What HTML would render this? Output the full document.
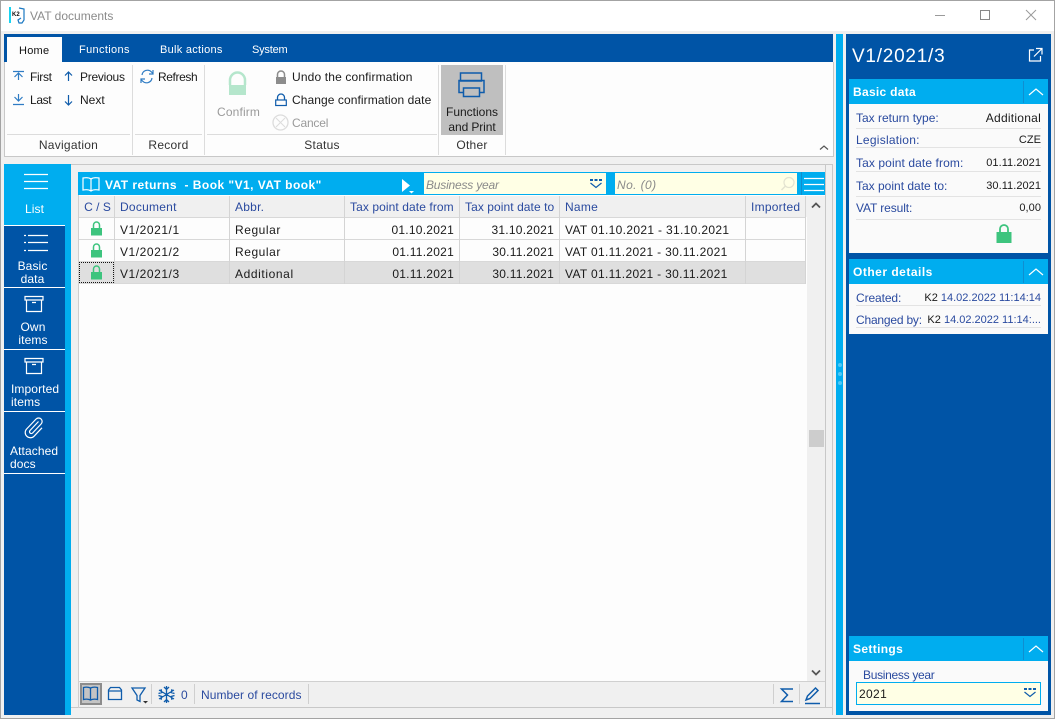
<!DOCTYPE html>
<html><head><meta charset="utf-8">
<style>
html,body{margin:0;padding:0;width:1055px;height:719px;overflow:hidden;background:#f0f0f0}
body{position:relative;font-family:"Liberation Sans",sans-serif;font-size:12px;color:#1a1a1a}
.a{position:absolute}
.t{position:absolute;white-space:nowrap;line-height:16px;letter-spacing:.25px}
.r{text-align:right}
.c{text-align:center}
.lb{color:#2a4a9f}
.g{color:#9a9a9a}
.v{font-size:11px;letter-spacing:.05px}
svg{position:absolute;overflow:visible}
.bl{fill:none;stroke:#0f5cab;stroke-width:1.2}
.w{fill:none;stroke:#fff;stroke-width:1.2}
.nav{position:absolute;left:4px;width:61px;height:61px;background:#0054a6;color:#fff}
.nav .t{left:0;width:58px;text-align:center;color:#fff;line-height:13px;letter-spacing:.1px}
.line{position:absolute;background:#dcdcdc}
.hd{position:absolute;left:849px;width:199px;height:25px;background:#00adef;color:#fff;font-weight:bold}
.card{position:absolute;left:849px;width:199px;background:#fafafa}
</style></head><body>
<div class="a" style="left:0;top:0;width:1053px;height:717px;border:1px solid #a3a3a3"></div>
<div class="a" style="left:1px;top:1px;width:1053px;height:30px;background:#fff"></div>
<div class="a" style="left:9px;top:7px;width:2px;height:16px;background:#19d3f0"></div>
<div class="a" style="left:12px;top:12px;font:bold 6px 'Liberation Sans',sans-serif;color:#111">K2</div>
<svg style="left:0;top:0" width="30" height="30"><path d="M19 8l5 1v11l-2 3h-3l-1-3 3-2" fill="none" stroke="#1a78c2" stroke-width="1.2"/></svg>
<div class="t" style="left:30px;top:8px;color:#8b8b8b;letter-spacing:0">VAT documents</div>
<svg style="left:0;top:0" width="1055" height="30"><path d="M935 15.500h10" stroke="#9a9a9a"/><rect x="980.500" y="10.500" width="9" height="9" fill="none" stroke="#888"/><path d="M1026 10l10 10M1036 10l-10 10" stroke="#9a9a9a" fill="none"/></svg>

<!-- Ribbon -->
<div class="a" style="left:4px;top:34px;width:829px;height:28px;background:#0054a6"></div>
<div class="a" style="left:7px;top:37px;width:55px;height:25px;background:#fdfdfd"></div>
<div class="t" style="left:19px;top:43px;font-size:11px;color:#111">Home</div>
<div class="t" style="left:79px;top:42px;font-size:11px;color:#fff;letter-spacing:.35px">Functions</div>
<div class="t" style="left:160px;top:42px;font-size:11px;color:#fff;letter-spacing:.28px">Bulk actions</div>
<div class="t" style="left:252px;top:42px;font-size:11px;color:#fff;letter-spacing:-.2px">System</div>
<div class="a" style="left:4px;top:62px;width:828px;height:94px;background:#fdfdfd;border:solid #c8c8c8;border-width:0 1px 1px 1px;box-sizing:content-box"></div>
<div class="line" style="left:132px;top:65px;width:1px;height:90px"></div>
<div class="line" style="left:204px;top:65px;width:1px;height:90px"></div>
<div class="line" style="left:438px;top:65px;width:1px;height:90px"></div>
<div class="line" style="left:505px;top:65px;width:1px;height:90px"></div>
<div class="line" style="left:7px;top:134px;width:123px;height:1px"></div>
<div class="line" style="left:135px;top:134px;width:67px;height:1px"></div>
<div class="line" style="left:207px;top:134px;width:230px;height:1px"></div>
<svg style="left:0;top:0" width="840" height="160">
<g class="bl">
<path d="M13 71.500h11M18.500 80v-7M14.500 77l4-4 4 4" stroke="#2f7cc4"/>
<path d="M18.500 94v7M14.500 97l4 4 4-4M13 104.500h11" stroke="#2f7cc4"/>
<path d="M68.500 81v-9M65 75.500l3.500-3.500 3.500 3.500"/>
<path d="M68.500 95v10M65 101.500l3.500 3.500 3.500-3.500"/>
<path d="M142 75a5.500 5.500 0 0 1 9.500-3l1.500 1.500M153 70v4h-4M152 78a5.500 5.500 0 0 1-9.500 3l-1.500-1.500M141 83v-4h4" stroke="#2f7cc4"/>
</g>
<path d="M230 85v-5a7.500 7.500 0 0 1 15 0v5" fill="none" stroke="#b5e6cc" stroke-width="2.500"/><rect x="229" y="85" width="17" height="10" fill="#b5e6cc"/>
<path d="M277.500 77v-2.500a3.500 3.500 0 0 1 7 0v2.500" fill="none" stroke="#8c8c8c" stroke-width="1.500"/><rect x="276" y="77" width="10" height="7" fill="#8c8c8c"/>
<path d="M277.500 100v-2.500a3.500 3.500 0 0 1 7 0v2.500" fill="none" stroke="#0f5cab" stroke-width="1.300"/><rect x="275.700" y="100" width="10.600" height="5.500" fill="none" stroke="#0f5cab" stroke-width="1.200"/>
<circle cx="280.500" cy="122.500" r="7.500" fill="none" stroke="#dcdcdc" stroke-width="1.300"/><path d="M276 118l9 9M285 118l-9 9" stroke="#dcdcdc"/>
<path d="M820 149.500l4-3.500 4 3.500" fill="none" stroke="#555" stroke-width="1.200"/>
</svg>
<div class="t" style="left:30px;top:69px;letter-spacing:-.35px">First</div>
<div class="t" style="left:80px;top:69px;letter-spacing:-.25px">Previous</div>
<div class="t" style="left:30px;top:92px;letter-spacing:-.35px">Last</div>
<div class="t" style="left:80px;top:92px;letter-spacing:0">Next</div>
<div class="t" style="left:158px;top:69px;letter-spacing:-.4px">Refresh</div>
<div class="t g" style="left:217px;top:104px;letter-spacing:.15px">Confirm</div>
<div class="t" style="left:292px;top:69px;letter-spacing:.15px">Undo the confirmation</div>
<div class="t" style="left:292px;top:92px;letter-spacing:.08px">Change confirmation date</div>
<div class="t g" style="left:292px;top:115px;letter-spacing:-.2px">Cancel</div>
<div class="t c" style="left:7px;top:137px;width:123px;color:#333">Navigation</div>
<div class="t c" style="left:135px;top:137px;width:67px;color:#333">Record</div>
<div class="t c" style="left:207px;top:137px;width:230px;color:#333">Status</div>
<div class="t c" style="left:439px;top:137px;width:66px;color:#333">Other</div>
<div class="a" style="left:441px;top:65px;width:62px;height:70px;background:#bfbfbf"></div>
<svg style="left:441px;top:65px" width="62" height="40"><g fill="none" stroke="#0f5cab" stroke-width="1.500"><rect x="19.500" y="8" width="21" height="8"/><rect x="18" y="15.500" width="25" height="12"/><rect x="22.500" y="23" width="16" height="8.500" fill="#bfbfbf"/></g></svg>
<div class="t c" style="left:441px;top:105px;width:62px;line-height:15px;letter-spacing:0">Functions<br><span style="letter-spacing:-.1px">and Print</span></div>

<!-- Main pane -->
<div class="a" style="left:4px;top:164px;width:67px;height:551px;background:#00adef"></div>
<div class="a" style="left:71px;top:164px;width:762px;height:1px;background:#c8c8c8"></div>
<div class="a" style="left:825px;top:164px;width:1px;height:544px;background:#c8c8c8"></div>
<div class="a" style="left:71px;top:707px;width:762px;height:1px;background:#c8c8c8"></div>
<div class="a" style="left:832px;top:164px;width:1px;height:551px;background:#c8c8c8"></div>
<div class="a" style="left:4px;top:473px;width:61px;height:242px;background:#0054a6"></div>
<div class="a" style="left:4px;top:164px;width:61px;height:61px;background:#00adef"></div>
<svg style="left:4px;top:164px" width="61" height="30"><path class="w" d="M20 10.500h24M20 17.500h24M20 24.500h24"/></svg>
<div class="t c" style="left:4px;top:201px;width:61px;color:#fff;letter-spacing:.1px">List</div>
<div class="a" style="left:4px;top:225px;width:61px;height:1px;background:#fff"></div>
<div class="nav" style="top:226px"><svg style="left:0;top:0" width="61" height="30"><path class="w" d="M24 9.500h20M24 16.500h20M24 24.500h20M20 9.500h2M20 16.500h2M20 24.500h2"/></svg><div class="t" style="top:34px;left:0;width:57px">Basic<br>data</div></div>
<div class="a" style="left:4px;top:287px;width:61px;height:1px;background:#fff"></div>
<div class="nav" style="top:288px"><svg style="left:0;top:0" width="61" height="30"><path class="w" d="M21 8.500h18v3.500h-18zM22.500 12v11.500h15V12M28 14.500h4"/></svg><div class="t" style="top:33px">Own<br>items</div></div>
<div class="a" style="left:4px;top:349px;width:61px;height:1px;background:#fff"></div>
<div class="nav" style="top:350px"><svg style="left:0;top:0" width="61" height="30"><path class="w" d="M21 8.500h18v3.500h-18zM22.500 12v11.500h15V12M28 14.500h4"/></svg><div class="t" style="top:33px;left:7px;width:auto;text-align:left">Imported<br>items</div></div>
<div class="a" style="left:4px;top:411px;width:61px;height:1px;background:#fff"></div>
<div class="nav" style="top:412px"><svg style="left:0;top:0" width="61" height="30"><path class="w" stroke-width="1.300" d="M35.500 10.500l-8.500 9a1.800 1.800 0 0 0 2.600 2.500l8.500-9a3.500 3.500 0 0 0-5-5l-9.500 10a5.200 5.200 0 0 0 7.400 7.300l8-8.500" transform="translate(-1 -1)"/></svg><div class="t" style="top:33px;left:6px;width:auto;text-align:left">Attached<br>docs</div></div>
<div class="a" style="left:4px;top:473px;width:61px;height:1px;background:#fff"></div>

<!-- Table -->
<div class="a" style="left:78px;top:172px;width:747px;height:23px;background:#00adef"></div>
<div class="a" style="left:78px;top:195px;width:1px;height:513px;background:#cfcfcf"></div>
<div class="a" style="left:79px;top:195px;width:746px;height:487px;background:#fdfdfd"></div>
<svg style="left:78px;top:172px" width="30" height="23"><path class="w" d="M13 7c-2-1.500-5-1.500-8-1v12c3-.5 6-.5 8 1 2-1.500 5-1.500 8-1V6c-3-.5-6-.5-8 1zM13 7v12" stroke-width="1.300"/></svg>
<div class="t" style="left:105px;top:177px;color:#fff;font-weight:bold;letter-spacing:.46px">VAT returns &nbsp;- Book "V1, VAT book"</div>
<svg style="left:400px;top:178px" width="20" height="18"><path d="M2 1l8 6.500-8 6.500z" fill="#fff"/><path d="M9 13h5l-2.500 2.500z" fill="#fff"/></svg>
<div class="a" style="left:424px;top:173px;width:182px;height:21px;background:#ffffe5"></div>
<div class="t" style="left:426px;top:177px;color:#8a8a8a;font-style:italic;letter-spacing:-.2px">Business year</div>
<svg style="left:589px;top:178px" width="16" height="14"><path d="M1 1h3v2h-3zM5.500 1h3v2h-3zM10 1h3v2h-3z" fill="#0f5cab"/><path d="M1.500 5l5.500 4.500 5.500-4.500" fill="none" stroke="#0f5cab" stroke-width="1.200"/></svg>
<div class="a" style="left:615px;top:173px;width:182px;height:21px;background:#ffffe5"></div>
<div class="t" style="left:617px;top:177px;color:#8a8a8a;font-style:italic;letter-spacing:.4px">No. (0)</div>
<svg style="left:780px;top:176px" width="16" height="16"><circle cx="9" cy="6.500" r="5" fill="none" stroke="#e3e3d0" stroke-width="1.200"/><path d="M5.500 10l-4 4" stroke="#e3e3d0" stroke-width="1.500"/></svg>
<svg style="left:800px;top:172px" width="25" height="23"><path d="M1.500 0v23" stroke="#0f8ed0"/><path class="w" d="M4 6.500h20M4 12.500h20M4 18.500h20"/></svg>

<div class="a" style="left:79px;top:196px;width:746px;height:21px;background:#f0f0f0"></div>
<div class="a" style="left:79px;top:217px;width:727px;height:1px;background:#d8d8d8"></div>
<div class="a" style="left:79px;top:239px;width:727px;height:1px;background:#d8d8d8"></div>
<div class="a" style="left:79px;top:261px;width:727px;height:1px;background:#d8d8d8"></div>
<div class="a" style="left:79px;top:262px;width:727px;height:21px;background:#dfdfdf"></div>
<div class="a" style="left:79px;top:283px;width:727px;height:1px;background:#d8d8d8"></div>
<div class="line" style="left:114px;top:196px;width:1px;height:88px;background:#d4d4d4"></div>
<div class="line" style="left:229px;top:196px;width:1px;height:88px;background:#d4d4d4"></div>
<div class="line" style="left:344px;top:196px;width:1px;height:88px;background:#d4d4d4"></div>
<div class="line" style="left:459px;top:196px;width:1px;height:88px;background:#d4d4d4"></div>
<div class="line" style="left:559px;top:196px;width:1px;height:88px;background:#d4d4d4"></div>
<div class="line" style="left:745px;top:196px;width:1px;height:88px;background:#d4d4d4"></div>
<div class="line" style="left:805px;top:196px;width:1px;height:88px;background:#d4d4d4"></div>
<div class="a" style="left:79px;top:262px;width:35px;height:21px;border:1px dotted #111;box-sizing:border-box"></div>

<div class="t lb c" style="left:80px;top:199px;width:35px;letter-spacing:0">C / S</div>
<div class="t lb" style="left:120px;top:199px">Document</div>
<div class="t lb" style="left:235px;top:199px">Abbr.</div>
<div class="t lb" style="left:350px;top:199px;letter-spacing:.09px">Tax point date from</div>
<div class="t lb" style="left:465px;top:199px;letter-spacing:.07px">Tax point date to</div>
<div class="t lb" style="left:565px;top:199px">Name</div>
<div class="t lb" style="left:751px;top:199px">Imported</div>

<svg style="left:0;top:0" width="110" height="290"><path d="M93.500 228v-3a3 3 0 0 1 6 0v3" fill="none" stroke="#3dc47e" stroke-width="1.500"/><rect x="91" y="228" width="11" height="7.500" fill="#3dc47e"/><path d="M93.500 250v-3a3 3 0 0 1 6 0v3" fill="none" stroke="#3dc47e" stroke-width="1.500"/><rect x="91" y="250" width="11" height="7.500" fill="#3dc47e"/><path d="M93.500 272v-3a3 3 0 0 1 6 0v3" fill="none" stroke="#3dc47e" stroke-width="1.500"/><rect x="91" y="272" width="11" height="7.500" fill="#3dc47e"/></svg>
<div class="t" style="left:120px;top:222px;letter-spacing:.55px">V1/2021/1</div>
<div class="t" style="left:235px;top:222px;letter-spacing:.55px">Regular</div>
<div class="t r" style="left:345px;top:222px;width:109px;letter-spacing:.25px">01.10.2021</div>
<div class="t r" style="left:460px;top:222px;width:94px;letter-spacing:.25px">31.10.2021</div>
<div class="t" style="left:565px;top:222px;letter-spacing:.33px">VAT 01.10.2021 - 31.10.2021</div>
<div class="t" style="left:120px;top:244px;letter-spacing:.55px">V1/2021/2</div>
<div class="t" style="left:235px;top:244px;letter-spacing:.55px">Regular</div>
<div class="t r" style="left:345px;top:244px;width:109px;letter-spacing:.25px">01.11.2021</div>
<div class="t r" style="left:460px;top:244px;width:94px;letter-spacing:.25px">30.11.2021</div>
<div class="t" style="left:565px;top:244px;letter-spacing:.33px">VAT 01.11.2021 - 30.11.2021</div>
<div class="t" style="left:120px;top:266px;letter-spacing:.55px">V1/2021/3</div>
<div class="t" style="left:235px;top:266px;letter-spacing:.6px">Additional</div>
<div class="t r" style="left:345px;top:266px;width:109px;letter-spacing:.25px">01.11.2021</div>
<div class="t r" style="left:460px;top:266px;width:94px;letter-spacing:.25px">30.11.2021</div>
<div class="t" style="left:565px;top:266px;letter-spacing:.33px">VAT 01.11.2021 - 30.11.2021</div>

<!-- Scrollbar -->
<div class="a" style="left:807px;top:196px;width:18px;height:486px;background:#f0f0f0"></div>
<div class="a" style="left:809px;top:430px;width:15px;height:17px;background:#cdcdcd"></div>
<svg style="left:807px;top:196px" width="18" height="490"><path d="M5 11.500l4-4 4 4" fill="none" stroke="#555" stroke-width="1.800"/><path d="M5 474.500l4 4 4-4" fill="none" stroke="#555" stroke-width="1.800"/></svg>

<!-- Status bar -->
<div class="a" style="left:78px;top:681px;width:747px;height:1px;background:#d0d0d0"></div>
<div class="a" style="left:79px;top:682px;width:746px;height:25px;background:#f0f0f0"></div>
<div class="a" style="left:80px;top:683px;width:22px;height:22px;background:#c4c4c4;border:2px solid #8c8c8c;box-sizing:border-box"></div>
<svg style="left:70px;top:670px" width="200" height="49"><g fill="none" stroke="#0f5cab" stroke-width="1.300"><path d="M20.500 18c-2-1-5-1-7-.5v12c2-.5 5-.5 7 .5 2-1 5-1 7-.5v-12c-2-.5-5-.5-7 .5zM20.500 18v12"/><path d="M38.500 20l2-2.500h9l2 2.500v9.500h-13zM38.500 21h13"/><path d="M62 18h13l-5 7.500v6l-3-1.500v-4.500z"/><path d="M96.500 16v17M89 20l15 9M104 20l-15 9M94 17l2.500 2.500 2.500-2.500M94 32l2.500-2.500 2.500 2.500M88.500 23.500l3.300-1-.8-3.300M104.500 23.500l-3.300-1 .8-3.300M88.500 25.500l3.300 1-.8 3.300M104.500 25.500l-3.300 1 .8 3.300"/></g><path d="M73 31h5l-2.500 2.500z" fill="#333"/></svg>
<div class="a" style="left:151px;top:684px;width:1px;height:20px;background:#cfcfcf"></div>
<div class="a" style="left:194px;top:684px;width:1px;height:20px;background:#cfcfcf"></div>
<div class="a" style="left:308px;top:684px;width:1px;height:20px;background:#cfcfcf"></div>
<div class="a" style="left:773px;top:684px;width:1px;height:20px;background:#cfcfcf"></div>
<div class="a" style="left:799px;top:684px;width:1px;height:20px;background:#cfcfcf"></div>
<div class="t lb" style="left:181px;top:687px">0</div>
<div class="t lb" style="left:201px;top:687px;letter-spacing:.07px">Number of records</div>
<svg style="left:760px;top:670px" width="70" height="49"><g fill="none" stroke="#0f5cab" stroke-width="1.500"><path d="M33 19h-11.500l6 6-6 6.500H33"/><path d="M46 30l1.500-4 8-8 2.500 2.500-8 8zM45 33.500h15"/></g></svg>

<!-- Splitter -->
<div class="a" style="left:836px;top:34px;width:7px;height:681px;background:#00adef"></div>
<div class="a" style="left:838px;top:363px;width:4px;height:4px;border-radius:2px;background:#4fc8f7"></div>
<div class="a" style="left:838px;top:372px;width:4px;height:4px;border-radius:2px;background:#4fc8f7"></div>
<div class="a" style="left:838px;top:381px;width:4px;height:4px;border-radius:2px;background:#4fc8f7"></div>

<!-- Right panel -->
<div class="a" style="left:846px;top:34px;width:205px;height:681px;background:#0054a6"></div>
<div class="t" style="left:852px;top:45px;font-size:19px;line-height:24px;color:#fff;letter-spacing:.75px">V1/2021/3</div>
<svg style="left:1028px;top:47px" width="16" height="16"><path class="w" stroke-width="1.400" d="M6 3H1.500v11h11V9M8 1.500h6v6M14 1.500L6 9.500"/></svg>

<div class="hd" style="top:79px"></div>
<div class="t" style="left:853px;top:84px;color:#fff;font-weight:bold;letter-spacing:.3px">Basic data</div>
<div class="card" style="top:104px;height:149px"></div>
<div class="hd" style="top:259px"></div>
<div class="t" style="left:853px;top:264px;color:#fff;font-weight:bold;letter-spacing:.5px">Other details</div>
<div class="card" style="top:284px;height:50px"></div>
<svg style="left:1020px;top:79px" width="30" height="210"><path d="M3.500 2v22M3.500 182v22" stroke="#0f8ed0"/><path class="w" stroke-width="1.400" d="M9 16l7-6 7 6"/><path class="w" stroke-width="1.400" d="M9 196l7-6 7 6"/></svg>

<div class="t lb" style="left:856px;top:110px;letter-spacing:0">Tax return type:</div><div class="t r" style="left:950px;top:110px;width:91px">Additional</div>
<div class="t lb" style="left:856px;top:132px">Legislation:</div><div class="t r v" style="left:950px;top:132px;width:91px">CZE</div>
<div class="t lb" style="left:856px;top:155px;letter-spacing:.1px">Tax point date from:</div><div class="t r v" style="left:950px;top:155px;width:91px">01.11.2021</div>
<div class="t lb" style="left:856px;top:178px;letter-spacing:0">Tax point date to:</div><div class="t r v" style="left:950px;top:178px;width:91px">30.11.2021</div>
<div class="t lb" style="left:856px;top:200px;letter-spacing:-.1px">VAT result:</div><div class="t r v" style="left:950px;top:200px;width:91px">0,00</div>
<div class="line" style="left:856px;top:128px;width:185px;height:1px;background:#e3e3e3"></div>
<div class="line" style="left:856px;top:147px;width:185px;height:1px;background:#e3e3e3"></div>
<div class="line" style="left:856px;top:171px;width:185px;height:1px;background:#e3e3e3"></div>
<div class="line" style="left:856px;top:196px;width:185px;height:1px;background:#e3e3e3"></div>
<div class="line" style="left:856px;top:219px;width:185px;height:1px;background:#e3e3e3"></div>
<svg style="left:990px;top:222px" width="30" height="24"><path d="M10 10V7a4 4 0 0 1 8 0v3" fill="none" stroke="#3dc47e" stroke-width="1.800"/><rect x="6.500" y="10" width="15" height="11" fill="#3dc47e"/></svg>

<div class="t lb" style="left:856px;top:290px;letter-spacing:-.1px">Created:</div>
<div class="t r" style="left:905px;top:290px;width:136px;font-size:11px;letter-spacing:0;color:#2a4a9f"><span style="color:#1a1a1a">K2</span> 14.02.2022 11:14:14</div>
<div class="t lb" style="left:856px;top:312px;letter-spacing:-.2px">Changed by:</div>
<div class="t r" style="left:905px;top:312px;width:136px;font-size:11px;letter-spacing:0;color:#2a4a9f"><span style="color:#1a1a1a">K2</span> 14.02.2022 11:14:...</div>
<div class="line" style="left:856px;top:305px;width:185px;height:1px;background:#e3e3e3"></div>
<div class="line" style="left:856px;top:327px;width:185px;height:1px;background:#e3e3e3"></div>

<div class="hd" style="top:636px"></div>
<div class="t" style="left:853px;top:641px;color:#fff;font-weight:bold;letter-spacing:.35px">Settings</div>
<svg style="left:1020px;top:636px" width="30" height="25"><path d="M3.500 2v22" stroke="#0f8ed0"/><path class="w" stroke-width="1.400" d="M9 16l7-6 7 6"/></svg>
<div class="card" style="top:661px;height:50px"></div>
<div class="t lb" style="left:863px;top:667px;letter-spacing:-.3px">Business year</div>
<div class="a" style="left:856px;top:682px;width:185px;height:23px;background:#ffffe5;border:1px solid #00adef;box-sizing:border-box"></div>
<div class="t" style="left:859px;top:686px;letter-spacing:.35px">2021</div>
<svg style="left:1023px;top:687px" width="16" height="14"><path d="M1 1h3v2h-3zM5.500 1h3v2h-3zM10 1h3v2h-3z" fill="#0f5cab"/><path d="M1.500 5l5.500 4.500 5.500-4.500" fill="none" stroke="#0f5cab" stroke-width="1.200"/></svg>
</body></html>
